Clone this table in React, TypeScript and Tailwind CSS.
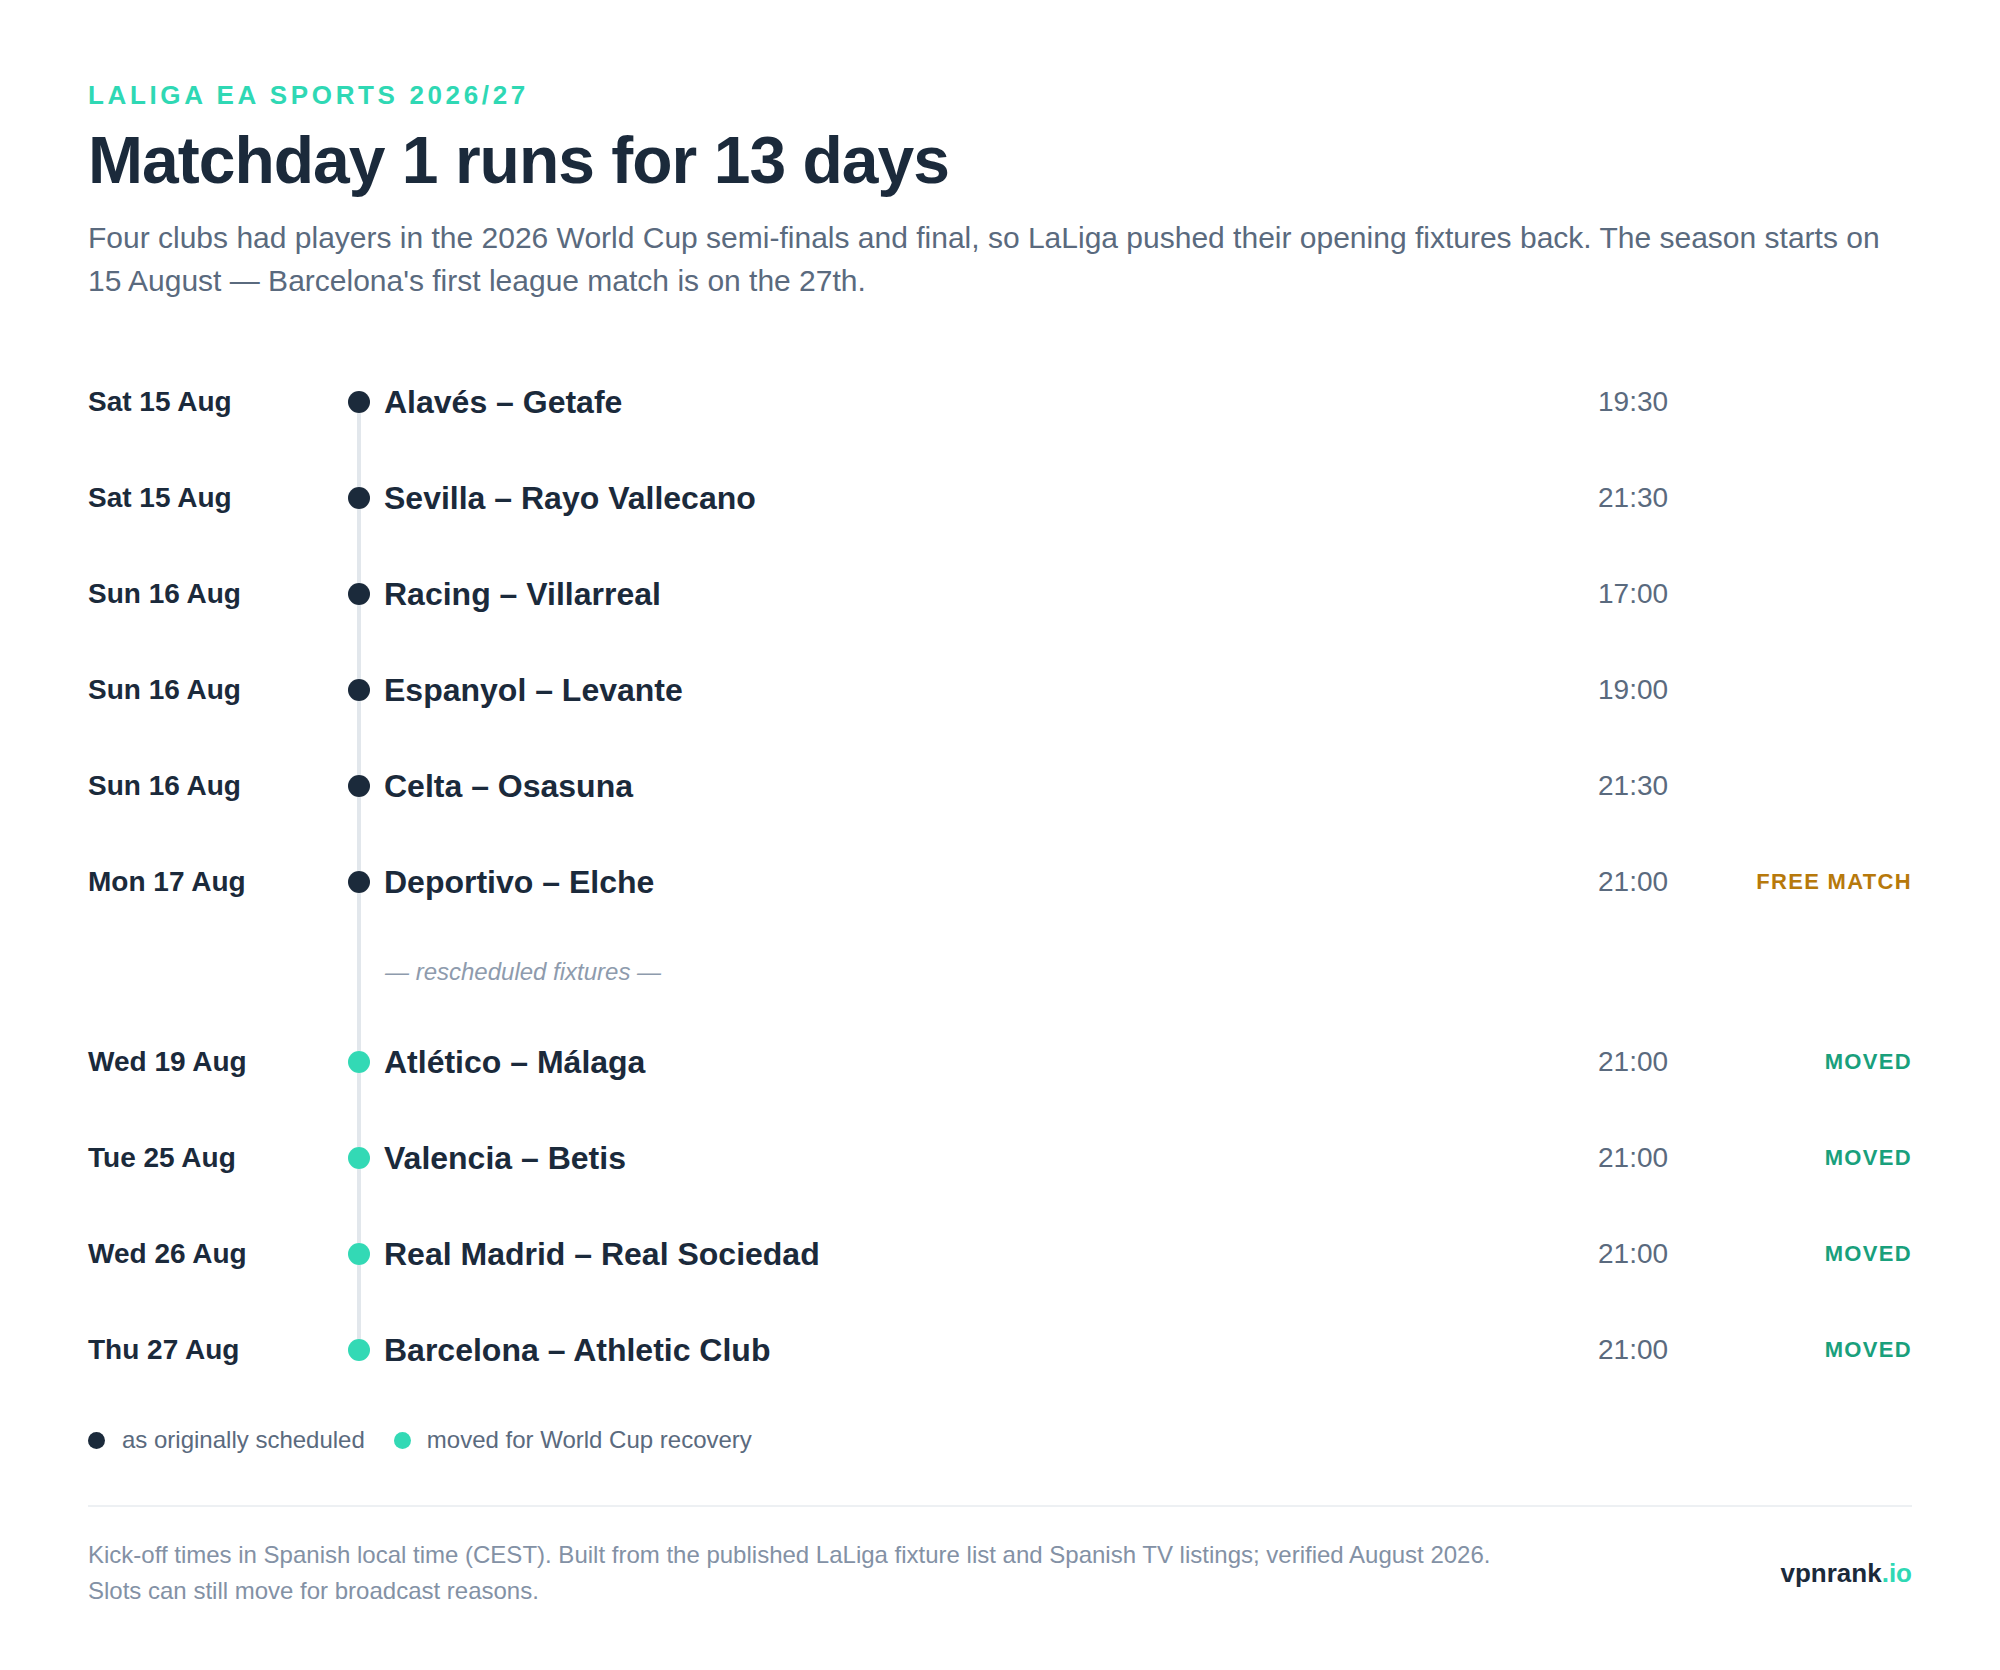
import React from "react";

type Fixture = {
  date: string;
  match: string;
  time: string;
  moved?: boolean;
  badge?: "FREE MATCH" | "MOVED";
};

const original: Fixture[] = [
  { date: "Sat 15 Aug", match: "Alavés – Getafe", time: "19:30" },
  { date: "Sat 15 Aug", match: "Sevilla – Rayo Vallecano", time: "21:30" },
  { date: "Sun 16 Aug", match: "Racing – Villarreal", time: "17:00" },
  { date: "Sun 16 Aug", match: "Espanyol – Levante", time: "19:00" },
  { date: "Sun 16 Aug", match: "Celta – Osasuna", time: "21:30" },
  { date: "Mon 17 Aug", match: "Deportivo – Elche", time: "21:00", badge: "FREE MATCH" },
];

const moved: Fixture[] = [
  { date: "Wed 19 Aug", match: "Atlético – Málaga", time: "21:00", moved: true, badge: "MOVED" },
  { date: "Tue 25 Aug", match: "Valencia – Betis", time: "21:00", moved: true, badge: "MOVED" },
  { date: "Wed 26 Aug", match: "Real Madrid – Real Sociedad", time: "21:00", moved: true, badge: "MOVED" },
  { date: "Thu 27 Aug", match: "Barcelona – Athletic Club", time: "21:00", moved: true, badge: "MOVED" },
];

function Row({ f, first, last }: { f: Fixture; first?: boolean; last?: boolean }) {
  return (
    <div className="flex h-[96px] items-stretch">
      <div className="flex w-[260px] items-center text-[28px] font-bold leading-[34px] text-[#1b2a3b]">
        {f.date}
      </div>
      <div className="flex w-[22px] flex-col items-center">
        <div className={first ? "w-[4px] flex-1" : "w-[4px] flex-1 bg-[#e2e7ec]"} />
        <div
          className={
            f.moved
              ? "h-[22px] w-[22px] shrink-0 rounded-full bg-[#33d9b5]"
              : "h-[22px] w-[22px] shrink-0 rounded-full bg-[#1b2a3b]"
          }
        />
        <div className={last ? "w-[4px] flex-1" : "w-[4px] flex-1 bg-[#e2e7ec]"} />
      </div>
      <div className="flex flex-1 items-center pl-[14px] text-[32px] font-bold leading-[38px] text-[#1b2a3b]">
        {f.match}
      </div>
      <div className="flex w-[120px] items-center text-[28px] leading-[34px] text-[#5a6a7e]">{f.time}</div>
      <div className="flex w-[194px] items-center justify-end">
        {f.badge === "FREE MATCH" && (
          <span className="text-[22px] font-bold leading-[26px] tracking-[0.06em] text-[#b7790b]">FREE MATCH</span>
        )}
        {f.badge === "MOVED" && (
          <span className="text-[22px] font-bold leading-[26px] tracking-[0.06em] text-[#19a07c]">MOVED</span>
        )}
      </div>
    </div>
  );
}

export default function App() {
  return (
    <div className="min-h-[1670px] w-full bg-white font-['Liberation_Sans',Arial,Helvetica,sans-serif]">
      <div className="px-[88px] pt-[80px] pb-[60px]">
        <div className="text-[26px] font-bold leading-[30px] tracking-[0.14em] text-[#2fd8b4]">
          LALIGA EA SPORTS 2026/27
        </div>
        <h1 className="mt-[14px] text-[66px] font-bold leading-[72px] tracking-[-0.015em] text-[#1b2a3b]">
          Matchday 1 runs for 13 days
        </h1>
        <p className="mt-[20px] text-[30px] leading-[43px] text-[#5a6a7e]">
          Four clubs had players in the 2026 World Cup semi-finals and final, so LaLiga pushed their opening fixtures
          back. The season starts on 15 August — Barcelona's first league match is on the 27th.
        </p>

        <div className="mt-[52px] flex flex-col">
          {original.map((f, i) => (
            <Row key={f.match} f={f} first={i === 0} />
          ))}
          <div className="flex h-[84px] items-stretch">
            <div className="w-[260px]" />
            <div className="flex w-[22px] flex-col items-center">
              <div className="w-[4px] flex-1 bg-[#e2e7ec]" />
            </div>
            <div className="flex flex-1 items-center pl-[15px] text-[24px] italic leading-[30px] text-[#8e9bad]">
              — rescheduled fixtures —
            </div>
          </div>
          {moved.map((f, i) => (
            <Row key={f.match} f={f} last={i === moved.length - 1} />
          ))}
        </div>

        <div className="mt-[24px] flex items-center text-[24px] leading-[36px] text-[#5a6a7e]">
          <span className="h-[17px] w-[17px] rounded-full bg-[#1b2a3b]" />
          <span className="ml-[17px]">as originally scheduled</span>
          <span className="ml-[29px] h-[17px] w-[17px] rounded-full bg-[#33d9b5]" />
          <span className="ml-[16px]">moved for World Cup recovery</span>
        </div>

        <div className="mt-[47px] h-[2px] w-full bg-[#edf0f3]" />

        <div className="flex items-center justify-between pt-[30px]">
          <p className="max-w-[1430px] text-[24px] leading-[36px] text-[#8391a5]">
            Kick-off times in Spanish local time (CEST). Built from the published LaLiga fixture list and Spanish TV
            listings; verified August 2026. Slots can still move for broadcast reasons.
          </p>
          <div className="text-[26px] font-bold leading-[32px] text-[#1b2a3b]">
            vpnrank<span className="text-[#2fd8b4]">.io</span>
          </div>
        </div>
      </div>
    </div>
  );
}
